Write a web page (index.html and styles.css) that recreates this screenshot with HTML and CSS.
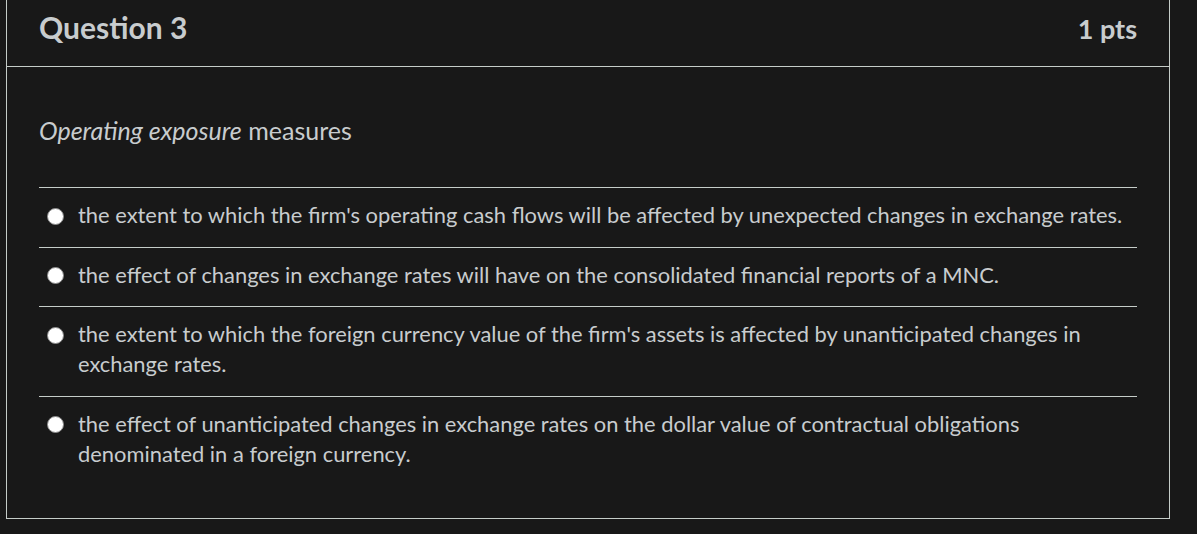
FILE: index.html
```html
<!DOCTYPE html>
<html lang="en">
<head>
<meta charset="utf-8">
<title>Question 3</title>
<link rel="stylesheet" href="styles.css">
</head>
<body>
<div class="question">
  <div class="header">
    <h2 class="name">Question 3</h2>
    <div class="points">1 pts</div>
  </div>
  <div class="body">
    <p class="text"><em>Operating exposure</em> measures</p>
    <div class="answers">
      <label class="answer">
        <span class="radio"></span>
        <span class="label">the extent to which the firm's operating cash flows will be affected by unexpected changes in exchange rates.</span>
      </label>
      <label class="answer">
        <span class="radio"></span>
        <span class="label">the effect of changes in exchange rates will have on the consolidated financial reports of a MNC.</span>
      </label>
      <label class="answer">
        <span class="radio"></span>
        <span class="label">the extent to which the foreign currency value of the firm's assets is affected by unanticipated changes in exchange rates.</span>
      </label>
      <label class="answer">
        <span class="radio"></span>
        <span class="label">the effect of unanticipated changes in exchange rates on the dollar value of contractual obligations denominated in a foreign currency.</span>
      </label>
    </div>
  </div>
</div>
</body>
</html>
```

FILE: styles.css
```css
html, body {
  margin: 0;
  padding: 0;
  background: #181818;
}
body {
  padding: 0 27px 0 6px;
  font-family: Lato, "Noto Sans", sans-serif;
  color: #c8ccce;
}
.question {
  border: 1px solid #c5ccc8;
  border-top: none;
  background: #181818;
}
.header {
  height: 67px;
  border-bottom: 1px solid #c5ccc8;
  padding: 0 32px;
  display: flex;
  align-items: center;
  justify-content: space-between;
  box-sizing: border-box;
}
.name {
  margin: 0;
  font-size: 30px;
  font-weight: 700;
  color: #c8ccce;
  padding-bottom: 13px;
}
.points {
  font-size: 27px;
  font-weight: 700;
  color: #c8ccce;
  padding-bottom: 10px;
}
.body {
  padding: 48px 32px 33px;
}
.text {
  margin: 0 0 42px;
  font-size: 25px;
  line-height: 30px;
}
.answers {
  display: flex;
  flex-direction: column;
}
.answer {
  display: flex;
  align-items: flex-start;
  border-top: 1px solid #c5ccc8;
  padding: 12px 0 16.5px 8px;
  font-size: 21.9px;
  line-height: 30px;
}
.radio {
  flex: none;
  width: 15px;
  height: 15px;
  border-radius: 50%;
  background: #ffffff;
  border: 1px solid #8a8a8a;
  margin-top: 7.5px;
  margin-right: 14px;
}
.label {
  flex: 1;
}
```
